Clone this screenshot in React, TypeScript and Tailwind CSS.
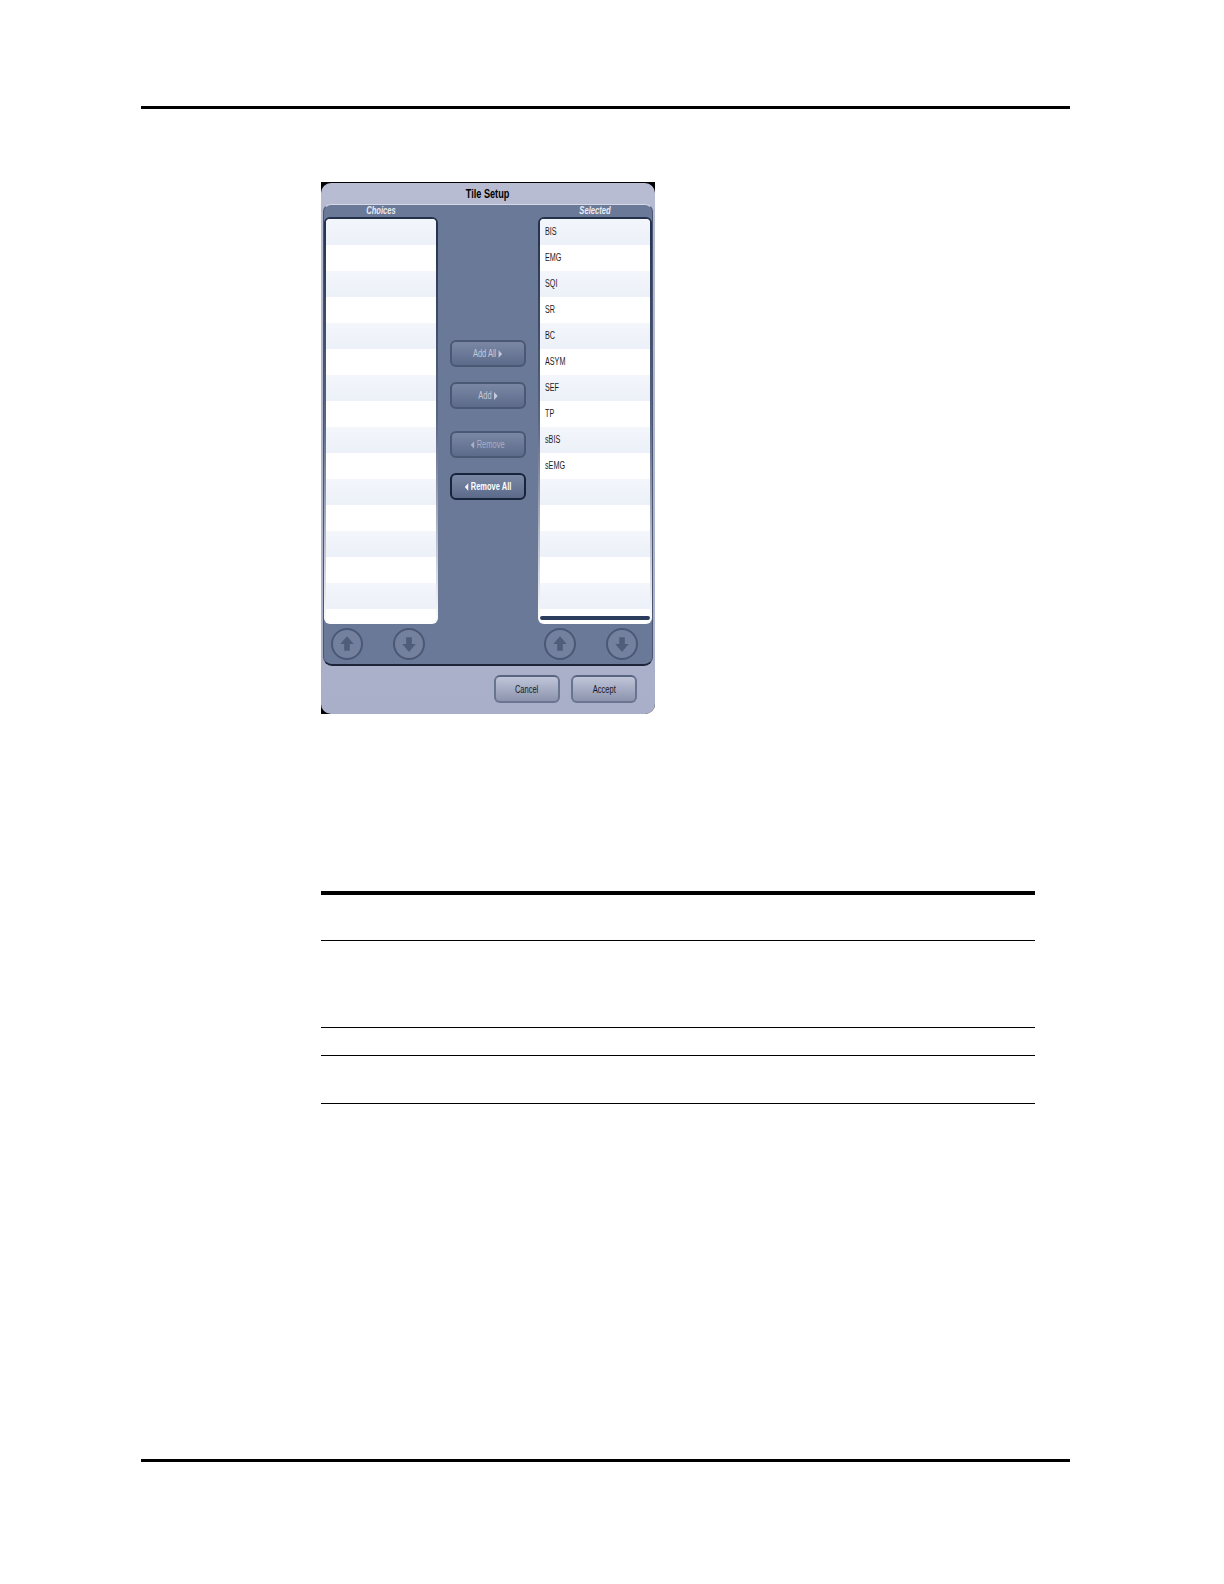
const font = "font-['Liberation_Sans',sans-serif]";

const selected = ['BIS', 'EMG', 'SQI', 'SR', 'BC', 'ASYM', 'SEF', 'TP', 'sBIS', 'sEMG'];

function Arrow({ dir, className = 'fill-[#f4f5f9]' }: { dir: 'left' | 'right'; className?: string }) {
  return (
    <svg width="5" height="8" viewBox="0 0 5 8" className={className}>
      <path d={dir === 'right' ? 'M0 0 L5 4 L0 8 Z' : 'M5 0 L0 4 L5 8 Z'} />
    </svg>
  );
}

function ListBox({ items, scrollBar }: { items: string[]; scrollBar?: boolean }) {
  const rows = Array.from({ length: 16 }, (_, i) => items[i] ?? '');
  return (
    <div className="w-[114px] h-[407px] rounded-[6px] p-[2px] bg-gradient-to-b from-[#22304b] via-[#5a6783] to-white">
      <div className="relative h-full bg-white rounded-[4px] overflow-hidden">
        {rows.map((label, i) => (
          <div
            key={i}
            className={`h-[26px] pl-[5px] pb-[2px] flex items-center text-[10px] text-[#1c1c1c] ${font} ${
              i % 2 === 0 ? 'bg-gradient-to-b from-[#f3f6fb] to-[#ecf0f8]' : 'bg-white'
            }`}
          >
            <span className="inline-block scale-x-[0.72] origin-left">{label}</span>
          </div>
        ))}
        {scrollBar && <div className="absolute left-0 right-0 bottom-[2px] h-[4px] rounded-[2px] bg-[#2c3c5c]" />}
      </div>
    </div>
  );
}

function MoveButton({ children, active }: { children: React.ReactNode; active?: boolean }) {
  return (
    <button
      className={`w-[76px] h-[27px] rounded-[6px] border-2 flex items-center justify-center text-[10px] bg-gradient-to-b from-[#7a87a4] to-[#5d6b8b] ${font} ${
        active ? 'border-[#18243c] text-white font-bold' : 'border-[#4b5874] text-[#c3c9d9]'
      }`}
    >
      <span className="flex items-center gap-[3px] scale-x-[0.75] whitespace-nowrap">{children}</span>
    </button>
  );
}

function RoundButton({ up }: { up: boolean }) {
  return (
    <div className="w-[32px] h-[32px] rounded-full border-2 border-[#4a5876] bg-[#74819e] flex items-center justify-center">
      <svg width="18" height="18" viewBox="0 0 16 16" className="fill-[#4f5d7b]">
        <path d={up ? 'M8 1 L14 8 L10.5 8 L10.5 14 L5.5 14 L5.5 8 L2 8 Z' : 'M8 15 L14 8 L10.5 8 L10.5 2 L5.5 2 L5.5 8 L2 8 Z'} />
      </svg>
    </div>
  );
}

function DialogButton({ label }: { label: string }) {
  return (
    <button
      className={`w-[66px] h-[28px] rounded-[6px] border-2 border-t-[#59647f] border-x-[#68738e] border-b-[#6a7591] bg-gradient-to-b from-[#c0c5d9] to-[#8c94ae] text-[10px] text-[#15181f] ${font}`}
    >
      <span className="inline-block scale-x-[0.75]">{label}</span>
    </button>
  );
}

export default function App() {
  return (
    <div className="w-[1224px] h-[1584px] bg-white pt-[106px] pl-[141px] overflow-hidden">
      <div className="w-[929px] h-[3px] bg-black" />

      {/* Tile Setup dialog */}
      <div className="ml-[180px] mt-[73px] w-[334px] h-[532px] bg-black rounded-br-[10px] pt-[1px]">
        <div className="h-[531px] rounded-[10px] bg-gradient-to-b from-[#b7bcd2] to-[#a9afc9] flex flex-col px-[2px]">
          <div className={`h-[21px] pt-[1px] flex items-center justify-center text-[12px] font-bold text-black ${font}`}>
            <span className="inline-block scale-x-[0.76]">Tile Setup</span>
          </div>
          <div className="h-[462px] rounded-t-[8px] rounded-b-[9px] bg-[#6b7998] border-t border-t-[#d5d9e6] border-b-2 border-x border-x-[#4a5672] border-b-[#1d2638] flex flex-col">
            <div className={`h-[12px] flex justify-between text-[10px] italic font-bold text-[#e9ecf4] ${font}`}>
              <span className="w-[114px] text-center leading-[12px] scale-x-[0.76]">Choices</span>
              <span className="w-[114px] text-center leading-[12px] scale-x-[0.76]">Selected</span>
            </div>
            <div className="flex justify-between">
              <ListBox items={[]} />
              <div className="flex-1 pt-[123px] flex flex-col items-center">
                <MoveButton>
                  Add All <Arrow dir="right" className="fill-[#c3c9d9]" />
                </MoveButton>
                <div className="mt-[15px]">
                  <MoveButton>
                    Add <Arrow dir="right" className="fill-[#c3c9d9]" />
                  </MoveButton>
                </div>
                <div className="mt-[22px]">
                  <MoveButton>
                    <Arrow dir="left" className="fill-[#a9b1c6]" />
                    <span className="text-[#a9b1c6]">Remove</span>
                  </MoveButton>
                </div>
                <div className="mt-[15px]">
                  <MoveButton active>
                    <Arrow dir="left" /> Remove All
                  </MoveButton>
                </div>
              </div>
              <ListBox items={selected} scrollBar />
            </div>
            <div className="flex justify-between pl-[7px] pr-[14px] pt-[4px]">
              <div className="flex gap-[30px]">
                <RoundButton up />
                <RoundButton up={false} />
              </div>
              <div className="flex gap-[30px]">
                <RoundButton up />
                <RoundButton up={false} />
              </div>
            </div>
          </div>
          <div className="flex justify-end gap-[11px] pt-[9px] pr-[16px]">
            <DialogButton label="Cancel" />
            <DialogButton label="Accept" />
          </div>
        </div>
      </div>

      {/* empty table rules */}
      <div className="ml-[180px] mt-[177px] w-[714px]">
        <div className="h-[4px] bg-black" />
        <div className="h-[46px] border-b border-black" />
        <div className="h-[87px] border-b border-black" />
        <div className="h-[28px] border-b border-black" />
        <div className="h-[48px] border-b border-black" />
      </div>

      <div className="mt-[355px] w-[929px] h-[3px] bg-black" />
    </div>
  );
}
